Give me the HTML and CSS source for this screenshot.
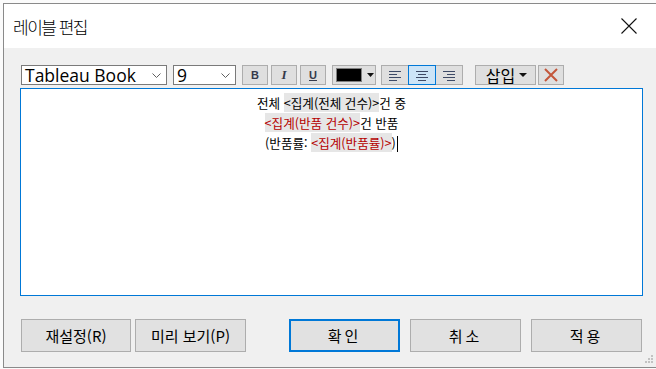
FILE: index.html
```html
<!DOCTYPE html>
<html lang="ko">
<head>
<meta charset="utf-8">
<title>레이블 편집</title>
<link rel="stylesheet" href="styles.css">
</head>
<body>
<div class="screen">
  <div class="dialog">
    <div class="titlebar">
      <span class="title">레이블 편집</span>
      <span class="close">
        <svg width="16" height="16" viewBox="0 0 16 16"><path d="M0.5 0.5 L15.5 15.5 M15.5 0.5 L0.5 15.5" stroke="#111" stroke-width="1.1" fill="none"/></svg>
      </span>
    </div>
    <div class="body">
      <div class="toolbar">
        <div class="select select-font">
          <span class="select-text">Tableau Book</span>
          <svg class="chev" width="9" height="5" viewBox="0 0 9 5"><path d="M0.5 0.5 L4.5 4.5 L8.5 0.5" stroke="#606060" fill="none"/></svg>
        </div>
        <div class="select select-size">
          <span class="select-text">9</span>
          <svg class="chev" width="9" height="5" viewBox="0 0 9 5"><path d="M0.5 0.5 L4.5 4.5 L8.5 0.5" stroke="#606060" fill="none"/></svg>
        </div>
        <button class="tbtn fmt fmt-b">B</button>
        <button class="tbtn fmt fmt-i">I</button>
        <button class="tbtn fmt fmt-u">U</button>
        <button class="tbtn color">
          <span class="swatch"></span>
          <svg width="7" height="4" viewBox="0 0 7 4"><path d="M0 0 H7 L3.5 4 Z" fill="#111"/></svg>
        </button>
        <div class="align-group">
          <button class="tbtn align">
            <svg width="12" height="11" viewBox="0 0 12 11"><path d="M0 1.5 H12 M0 4.5 H8 M0 7.5 H12 M0 10.5 H8" stroke="#3e4a66" stroke-width="1"/></svg>
          </button>
          <button class="tbtn align active">
            <svg width="12" height="11" viewBox="0 0 12 11"><path d="M0 1.5 H12 M2 4.5 H10 M0 7.5 H12 M2 10.5 H10" stroke="#3e4a66" stroke-width="1"/></svg>
          </button>
          <button class="tbtn align">
            <svg width="12" height="11" viewBox="0 0 12 11"><path d="M0 1.5 H12 M4 4.5 H12 M0 7.5 H12 M4 10.5 H12" stroke="#3e4a66" stroke-width="1"/></svg>
          </button>
        </div>
        <button class="tbtn insert">
          <span>삽입</span>
          <svg width="8" height="4" viewBox="0 0 8 4"><path d="M0 0 H8 L4 4 Z" fill="#111"/></svg>
        </button>
        <button class="tbtn clear">
          <svg width="14" height="14" viewBox="0 0 14 14"><path d="M1 1 L13 13 M13 1 L1 13" stroke="#c3563a" stroke-width="2"/></svg>
        </button>
      </div>
      <div class="editor">
        <p class="line">전체 <span class="field">&lt;집계(전체 건수)&gt;</span>건 중</p>
        <p class="line"><span class="field red">&lt;집계(반품 건수)&gt;</span>건 반품</p>
        <p class="line">(반품률: <span class="field red">&lt;집계(반품률)&gt;</span>)<span class="caret"></span></p>
      </div>
      <div class="actions">
        <button class="btn btn-reset">재설정(R)</button>
        <button class="btn btn-preview">미리 보기(P)</button>
        <button class="btn btn-ok">확인</button>
        <button class="btn btn-cancel">취소</button>
        <button class="btn btn-apply">적용</button>
      </div>
    </div>
    <svg class="grip" width="9" height="9" viewBox="0 0 9 9">
      <rect x="6" y="0" width="2" height="2" fill="#c2c2c2"/>
      <rect x="3" y="3" width="2" height="2" fill="#c2c2c2"/>
      <rect x="6" y="3" width="2" height="2" fill="#c2c2c2"/>
      <rect x="0" y="6" width="2" height="2" fill="#c2c2c2"/>
      <rect x="3" y="6" width="2" height="2" fill="#c2c2c2"/>
      <rect x="6" y="6" width="2" height="2" fill="#c2c2c2"/>
    </svg>
  </div>
</div>
</body>
</html>
```

FILE: styles.css
```css
* { box-sizing: border-box; }
html, body { margin: 0; padding: 0; }
body {
  width: 656px;
  height: 369px;
  overflow: hidden;
  background: #ffffff;
  font-family: "Noto Sans CJK KR", "Noto Sans", sans-serif;
  color: #000;
}
.screen {
  padding: 3px 0 0 3px;
  height: 369px;
  overflow: hidden;
  background: #fbfbfb;
}
.dialog {
  position: relative;
  width: 670px;
  border: 1px solid #8a8a8a;
  border-right: none;
  background: #f0f0f0;
}
.titlebar {
  height: 44px;
  background: #ffffff;
  display: flex;
  align-items: center;
  justify-content: space-between;
  padding: 0 36px 0 9px;
}
.title {
  font-size: 17px;
  letter-spacing: -1.5px;
  line-height: 20px;
  margin-top: 2px;
  font-weight: 300;
}
.close { display: flex; width: 16px; height: 16px; }
.body {
  height: 319px;
  padding: 17px 0 0 16px;
}
.toolbar {
  display: flex;
  align-items: center;
  height: 20px;
  margin-left: 1px;
}
.select {
  height: 20px;
  border: 1px solid #7a7a7a;
  background: #fff;
  display: flex;
  align-items: center;
  justify-content: space-between;
  padding: 0 5px 0 3px;
}
.select-text {
  font-family: "Open Sans", "Noto Sans", sans-serif;
  font-size: 17.5px;
  line-height: 18px;
  color: #000;
}
.select-font { width: 146px; }
.select-size { width: 63px; margin-left: 6px; }
.chev { display: block; }
.tbtn {
  height: 20px;
  border: 1px solid #adadad;
  background: #dfdfdf;
  padding: 0;
  display: flex;
  align-items: center;
  justify-content: center;
  font-family: "Noto Sans CJK KR", sans-serif;
}
.fmt {
  width: 26px;
  margin-left: 3px;
  font-family: "Liberation Sans", sans-serif;
  font-size: 11px;
  font-weight: bold;
  color: #353a4a;
}
.fmt-b { margin-left: 6px; }
.fmt-i { font-family: "Liberation Serif", serif; font-style: italic; font-size: 13px; }
.fmt-u { text-decoration: underline; }
.color {
  width: 44px;
  margin-left: 6px;
  justify-content: flex-start;
  padding-left: 3px;
  gap: 5px;
}
.swatch {
  width: 26px;
  height: 14px;
  background: #000;
  border: 1px solid #808080;
}
.align-group {
  display: flex;
  margin-left: 5px;
}
.align {
  width: 28px;
  margin-left: -1px;
}
.align:first-child { margin-left: 0; }
.align.active {
  background: #cce4f7;
  border-color: #0078d7;
  position: relative;
}
.insert {
  width: 61px;
  margin-left: 12px;
  font-size: 16px;
  line-height: 18px;
  gap: 4px;
  padding-left: 2px;
}
.clear {
  width: 26px;
  margin-left: 2px;
}
.editor {
  margin-top: 3px;
  width: 623px;
  height: 208px;
  border: 1px solid #0078d7;
  background: #fff;
  padding-top: 4px;
  font-size: 12.6px;
  line-height: 20px;
  text-align: center;
}
.line { margin: 0; }
.field { background: #e6e6e6; }
.red { color: #b50000; }
.caret {
  display: inline-block;
  width: 1px;
  height: 16px;
  background: #000;
  vertical-align: -4px;
  margin-left: 1px;
}
.actions {
  display: flex;
  margin-top: 23px;
  margin-left: 1px;
  height: 33px;
}
.btn {
  height: 33px;
  width: 111px;
  border: 1px solid #adadad;
  background: #e1e1e1;
  font-family: "Noto Sans CJK KR", sans-serif;
  font-size: 15px;
  color: #000;
  padding: 0;
}
.btn-reset { width: 110px; }
.btn-preview { margin-left: 4px; }
.btn-ok { margin-left: 43px; border: 2px solid #0078d7; letter-spacing: 3px; }
.btn-cancel { margin-left: 10px; letter-spacing: 3px; }
.btn-apply { margin-left: 10px; letter-spacing: 3px; }
.grip {
  position: absolute;
  left: 641px;
  top: 351px;
}
```
